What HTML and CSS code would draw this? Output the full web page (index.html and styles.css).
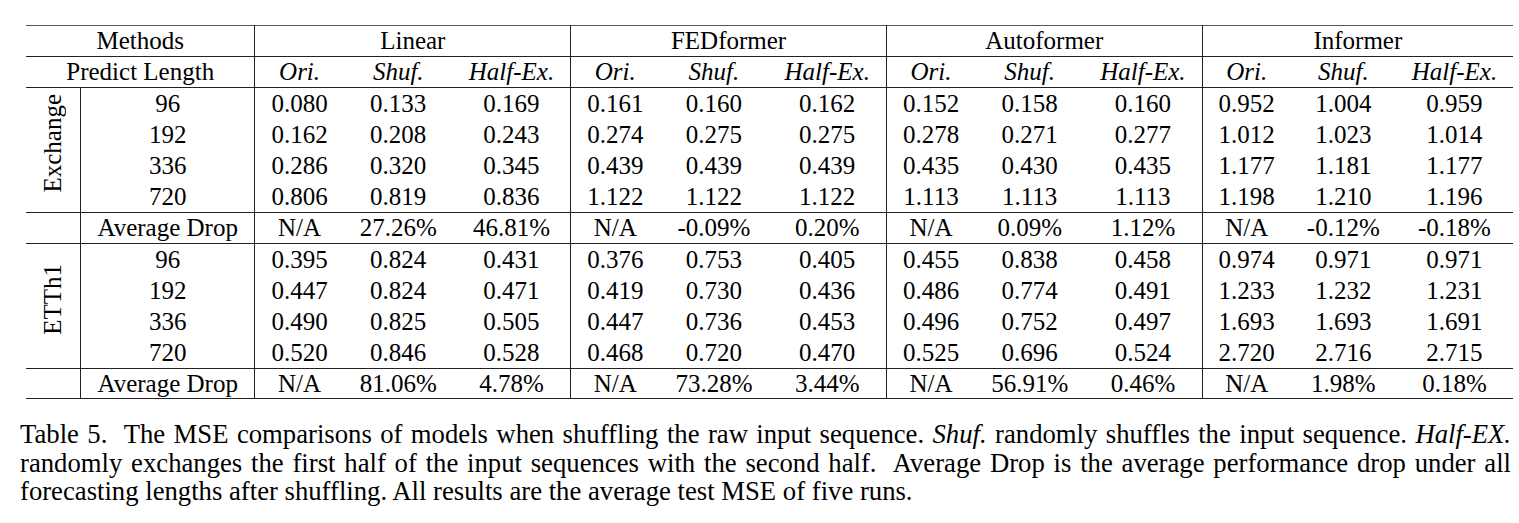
FILE: index.html
```html
<!DOCTYPE html>
<html>
<head>
<meta charset="utf-8">
<link rel="stylesheet" href="styles.css">
</head>
<body>
<div class="page">
<table class="results">
  <thead>
    <tr class="head-top">
      <th colspan="2" class="lead">Methods</th>
      <th colspan="3" class="grp">Linear</th>
      <th colspan="3" class="grp">FEDformer</th>
      <th colspan="3" class="grp">Autoformer</th>
      <th colspan="3" class="grp">Informer</th>
    </tr>
    <tr class="head-sub">
      <th colspan="2" class="lead">Predict Length</th>
      <th class="grp"><i>Ori.</i></th><th><i>Shuf.</i></th><th><i>Half-Ex.</i></th>
      <th class="grp"><i>Ori.</i></th><th><i>Shuf.</i></th><th><i>Half-Ex.</i></th>
      <th class="grp"><i>Ori.</i></th><th><i>Shuf.</i></th><th><i>Half-Ex.</i></th>
      <th class="grp"><i>Ori.</i></th><th><i>Shuf.</i></th><th><i>Half-Ex.</i></th>
    </tr>
  </thead>
  <tbody>
    <tr class="data first">
      <td rowspan="4" class="dataset"><span class="vlabel">Exchange</span></td>
      <td class="len">96</td>
      <td class="grp">0.080</td><td>0.133</td><td>0.169</td>
      <td class="grp">0.161</td><td>0.160</td><td>0.162</td>
      <td class="grp">0.152</td><td>0.158</td><td>0.160</td>
      <td class="grp">0.952</td><td>1.004</td><td>0.959</td>
    </tr>
    <tr class="data">
      <td class="len">192</td>
      <td class="grp">0.162</td><td>0.208</td><td>0.243</td>
      <td class="grp">0.274</td><td>0.275</td><td>0.275</td>
      <td class="grp">0.278</td><td>0.271</td><td>0.277</td>
      <td class="grp">1.012</td><td>1.023</td><td>1.014</td>
    </tr>
    <tr class="data">
      <td class="len">336</td>
      <td class="grp">0.286</td><td>0.320</td><td>0.345</td>
      <td class="grp">0.439</td><td>0.439</td><td>0.439</td>
      <td class="grp">0.435</td><td>0.430</td><td>0.435</td>
      <td class="grp">1.177</td><td>1.181</td><td>1.177</td>
    </tr>
    <tr class="data">
      <td class="len">720</td>
      <td class="grp">0.806</td><td>0.819</td><td>0.836</td>
      <td class="grp">1.122</td><td>1.122</td><td>1.122</td>
      <td class="grp">1.113</td><td>1.113</td><td>1.113</td>
      <td class="grp">1.198</td><td>1.210</td><td>1.196</td>
    </tr>
    <tr class="avg">
      <td class="dataset"></td>
      <td class="len">Average Drop</td>
      <td class="grp">N/A</td><td>27.26%</td><td>46.81%</td>
      <td class="grp">N/A</td><td>-0.09%</td><td>0.20%</td>
      <td class="grp">N/A</td><td>0.09%</td><td>1.12%</td>
      <td class="grp">N/A</td><td>-0.12%</td><td>-0.18%</td>
    </tr>
    <tr class="data first">
      <td rowspan="4" class="dataset"><span class="vlabel">ETTh1</span></td>
      <td class="len">96</td>
      <td class="grp">0.395</td><td>0.824</td><td>0.431</td>
      <td class="grp">0.376</td><td>0.753</td><td>0.405</td>
      <td class="grp">0.455</td><td>0.838</td><td>0.458</td>
      <td class="grp">0.974</td><td>0.971</td><td>0.971</td>
    </tr>
    <tr class="data">
      <td class="len">192</td>
      <td class="grp">0.447</td><td>0.824</td><td>0.471</td>
      <td class="grp">0.419</td><td>0.730</td><td>0.436</td>
      <td class="grp">0.486</td><td>0.774</td><td>0.491</td>
      <td class="grp">1.233</td><td>1.232</td><td>1.231</td>
    </tr>
    <tr class="data">
      <td class="len">336</td>
      <td class="grp">0.490</td><td>0.825</td><td>0.505</td>
      <td class="grp">0.447</td><td>0.736</td><td>0.453</td>
      <td class="grp">0.496</td><td>0.752</td><td>0.497</td>
      <td class="grp">1.693</td><td>1.693</td><td>1.691</td>
    </tr>
    <tr class="data">
      <td class="len">720</td>
      <td class="grp">0.520</td><td>0.846</td><td>0.528</td>
      <td class="grp">0.468</td><td>0.720</td><td>0.470</td>
      <td class="grp">0.525</td><td>0.696</td><td>0.524</td>
      <td class="grp">2.720</td><td>2.716</td><td>2.715</td>
    </tr>
    <tr class="avg last">
      <td class="dataset"></td>
      <td class="len">Average Drop</td>
      <td class="grp">N/A</td><td>81.06%</td><td>4.78%</td>
      <td class="grp">N/A</td><td>73.28%</td><td>3.44%</td>
      <td class="grp">N/A</td><td>56.91%</td><td>0.46%</td>
      <td class="grp">N/A</td><td>1.98%</td><td>0.18%</td>
    </tr>
  </tbody>
</table>
<div class="caption">
  <div class="cap-line">Table 5.&nbsp; The MSE comparisons of models when shuffling the raw input sequence. <i>Shuf.</i> randomly shuffles the input sequence. <i>Half-EX.</i></div>
  <div class="cap-line">randomly exchanges the first half of the input sequences with the second half.&nbsp; Average Drop is the average performance drop under all</div>
  <div class="cap-line end">forecasting lengths after shuffling. All results are the average test MSE of five runs.</div>
</div>
</div>
</body>
</html>
```

FILE: styles.css
```css
html, body {
  margin: 0;
  padding: 0;
  background: #ffffff;
}

.page {
  padding-top: 25px;
  font-family: "Liberation Serif", "Times New Roman", serif;
  color: #000;
}

.results {
  border-collapse: collapse;
  margin-left: 26px;
  font-size: 25px;
  border-top: 1px solid #555;
  border-bottom: 1px solid #555;
}

.results th,
.results td {
  padding: 0 16px;
  text-align: center;
  white-space: nowrap;
  font-weight: normal;
  vertical-align: middle;
}

.results td.len {
  padding: 0 16.5px;
}

.head-top th {
  line-height: 30px;
  border-bottom: 1px solid #222;
}

.head-sub th {
  line-height: 30px;
  border-bottom: 1px solid #222;
}

.data td {
  line-height: 31px;
}

.avg td {
  line-height: 30px;
  border-top: 1px solid #222;
  border-bottom: 1px solid #222;
}

.avg.last td {
  line-height: 29px;
}

.results .grp {
  border-left: 1px solid #222;
}

.results .len {
  border-left: 1px solid #222;
}

.dataset {
  width: 20px;
}

.vlabel {
  display: inline-block;
  writing-mode: vertical-rl;
  transform: rotate(180deg);
  line-height: 22px;
  position: relative;
  top: -3px;
}

.caption {
  margin-left: 20px;
  width: 1491px;
  margin-top: 21px;
  font-size: 26.7px;
  line-height: 28.7px;
}

.cap-line {
  text-align: justify;
  text-align-last: justify;
}

.cap-line.end {
  text-align-last: left;
}
```
